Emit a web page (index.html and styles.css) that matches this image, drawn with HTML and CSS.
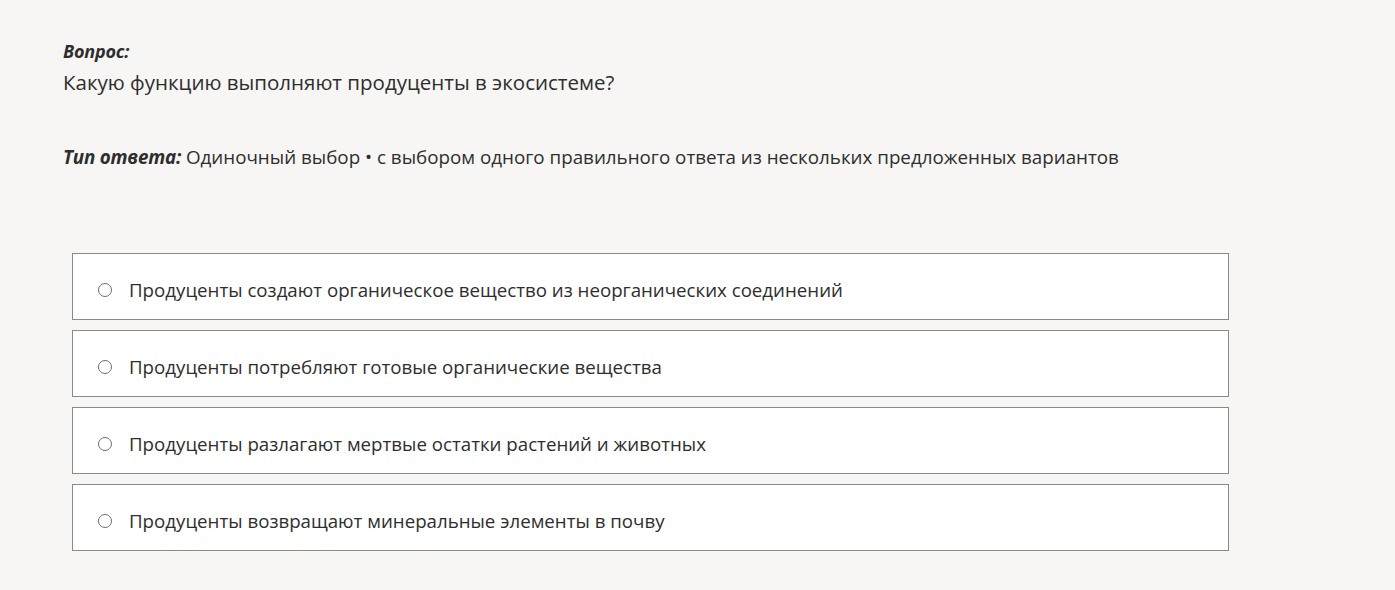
FILE: index.html
```html
<!DOCTYPE html>
<html lang="ru">
<head>
<meta charset="utf-8">
<link rel="stylesheet" href="styles.css">
</head>
<body>
<main class="page">
  <section class="question">
    <div class="label">Вопрос:</div>
    <div class="text">Какую функцию выполняют продуценты в экосистеме?</div>
  </section>
  <div class="type"><span class="type-label">Тип ответа:</span> Одиночный выбор • с выбором одного правильного ответа из нескольких предложенных вариантов</div>
  <ul class="options">
    <li class="option"><span class="radio"></span><span>Продуценты создают органическое вещество из неорганических соединений</span></li>
    <li class="option"><span class="radio"></span><span>Продуценты потребляют готовые органические вещества</span></li>
    <li class="option"><span class="radio"></span><span>Продуценты разлагают мертвые остатки растений и животных</span></li>
    <li class="option"><span class="radio"></span><span>Продуценты возвращают минеральные элементы в почву</span></li>
  </ul>
</main>
</body>
</html>
```
FILE: styles.css
```css
html, body {
  margin: 0;
  padding: 0;
  background: #f7f6f4;
}
body {
  font-family: "Open Sans", "Noto Sans", sans-serif;
  color: #2e2e2e;
}
.page {
  padding: 38px 0 0 63px;
}
.label {
  font-style: italic;
  font-weight: 700;
  font-size: 18px;
  line-height: 26px;
  letter-spacing: -0.2px;
}
.text {
  font-size: 20.5px;
  line-height: 36px;
}
.type {
  margin-top: 44px;
  font-size: 18.8px;
  line-height: 26px;
}
.type-label {
  font-style: italic;
  font-weight: 700;
  letter-spacing: -0.2px;
}
.options {
  list-style: none;
  margin: 83px 0 0 9px;
  padding: 0;
  width: 1157px;
  display: flex;
  flex-direction: column;
  gap: 10px;
}
.option {
  box-sizing: border-box;
  height: 67px;
  background: #fff;
  border: 1px solid #8a8a8a;
  display: flex;
  align-items: center;
  padding: 6px 0 0 25px;
  font-size: 18.7px;
  gap: 17px;
}
.radio {
  width: 14px;
  height: 14px;
  border: 1px solid #6f6f6f;
  border-radius: 50%;
  box-sizing: border-box;
  flex: none;
}
```
